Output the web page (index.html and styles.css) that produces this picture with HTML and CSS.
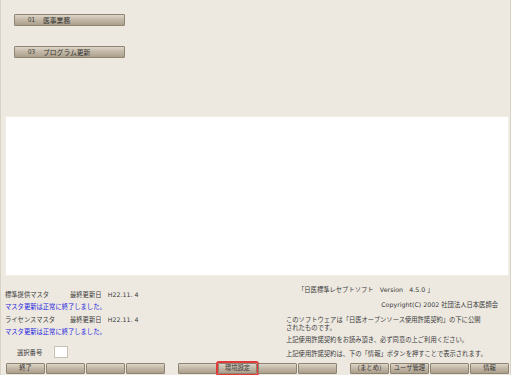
FILE: index.html
```html
<!DOCTYPE html>
<html lang="ja">
<head>
<meta charset="utf-8">
<link rel="stylesheet" href="styles.css">
</head>
<body>
<div class="window">
  <div class="menu">
    <div class="btn menu-btn"><span class="num">01</span>医事業務</div>
    <div class="btn menu-btn"><span class="num">03</span>プログラム更新</div>
  </div>
  <div class="panel"></div>
  <div class="info">
    <div class="left">
      <div class="line"><span class="name">標準提供マスタ</span><span>最終更新日　H22.11. 4</span></div>
      <div class="line blue">マスタ更新は正常に終了しました。</div>
      <div class="line"><span class="name">ライセンスマスタ</span><span>最終更新日　H22.11. 4</span></div>
      <div class="line blue">マスタ更新は正常に終了しました。</div>
      <div class="select">
        <span class="select-label">選択番号</span>
        <span class="select-box"></span>
      </div>
    </div>
    <div class="right">
      <div class="version">「日医標準レセプトソフト　Version　4.5.0 」</div>
      <div class="copy">Copyright(C) 2002 社団法人日本医師会</div>
      <div class="para p1">このソフトウェアは「日医オープンソース使用許諾契約」の下に公開<br>されたものです。</div>
      <div class="para p2">上記使用許諾契約をお読み頂き、必ず同意の上ご利用ください。</div>
      <div class="para p3">上記使用許諾契約は、下の「情報」ボタンを押すことで表示されます。</div>
    </div>
  </div>
  <div class="footer">
    <div class="group">
      <div class="btn fbtn">終了</div>
      <div class="btn fbtn"></div>
      <div class="btn fbtn"></div>
      <div class="btn fbtn"></div>
    </div>
    <div class="group">
      <div class="btn fbtn"></div>
      <div class="btn fbtn focus">環境設定</div>
      <div class="btn fbtn"></div>
      <div class="btn fbtn"></div>
    </div>
    <div class="group">
      <div class="btn fbtn">（まとめ）</div>
      <div class="btn fbtn">ユーザ管理</div>
      <div class="btn fbtn"></div>
      <div class="btn fbtn">情報</div>
    </div>
  </div>
</div>
</body>
</html>
```
FILE: styles.css
```css
* { box-sizing: border-box; }
html, body {
  margin: 0;
  padding: 0;
  width: 511px;
  height: 375px;
  overflow: hidden;
}
body {
  font-family: "DejaVu Sans", "Noto Sans CJK JP", sans-serif;
  font-size: 6.3px;
  color: #3a3a3a;
  background: #ede9e1;
}
.window {
  width: 511px;
  height: 375px;
  border-left: 1px solid #d9d3c6;
  border-right: 1px solid #d9d3c6;
  display: flex;
  flex-direction: column;
}
.btn {
  background: linear-gradient(#ddd5c8 0%, #c4b9a8 45%, #ab9f8c 100%);
  border: 1px solid #8f8472;
  border-radius: 1px;
  color: #333;
  display: flex;
  align-items: center;
  white-space: nowrap;
  line-height: 1;
}
.menu {
  height: 116px;
  padding: 14px 0 0 13px;
  display: flex;
  flex-direction: column;
  gap: 20px;
}
.menu-btn {
  width: 111px;
  height: 12px;
  padding-left: 13px;
  font-family: "Noto Sans CJK JP", sans-serif;
  font-size: 6.8px;
}
.num {
  width: 15px;
  font-size: 6.3px;
}
.panel {
  height: 160px;
  margin: 0 1px 0 4px;
  background: #fff;
  border: 1px solid #f3efe6;
}
.info {
  display: flex;
  height: 85px;
}
.left {
  width: 280px;
  padding: 13px 0 0 4px;
  display: flex;
  flex-direction: column;
}
.line {
  height: 12.3px;
  line-height: 12.3px;
  display: flex;
  white-space: nowrap;
}
.name { width: 65px; }
.blue { color: #2424e0; }
.select {
  margin-top: 8px;
  margin-left: 12px;
  display: flex;
  align-items: center;
  height: 12px;
}
.select-label { width: 37px; }
.select-box {
  width: 14px;
  height: 12px;
  background: #fff;
  border: 1px solid #c9c2b4;
}
.right {
  flex: 1;
  padding: 10px 0 0 5px;
  white-space: nowrap;
}
.version {
  padding-left: 12px;
  line-height: 8px;
}
.copy {
  text-align: right;
  padding-right: 12px;
  margin-top: 7px;
  line-height: 8px;
}
.para { line-height: 7.5px; }
.p1 { margin-top: 7px; }
.p2 { margin-top: 5px; }
.p3 { margin-top: 6px; }
.footer {
  display: flex;
  gap: 13px;
  padding: 2px 0 0 5px;
}
.group {
  display: flex;
  gap: 1px;
}
.fbtn {
  width: 39px;
  height: 11px;
  justify-content: center;
}
.focus {
  outline: 2px solid #e23a3a;
  outline-offset: 0px;
}
```
